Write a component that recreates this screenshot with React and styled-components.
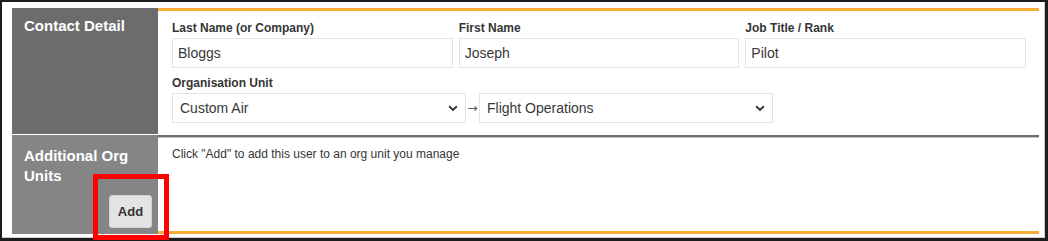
import React from 'react';
import styled, { createGlobalStyle } from 'styled-components';

const GlobalStyle = createGlobalStyle`
  html, body {
    margin: 0;
    padding: 0;
    background: #ffffff;
  }
  body {
    font-family: "Liberation Sans", Arial, sans-serif;
  }
  * {
    box-sizing: border-box;
  }
`;

const Frame = styled.div`
  position: relative;
  width: 1048px;
  height: 241px;
  border-style: solid;
  border-color: #1d1d1d;
  border-width: 2px 3px 3px 2px;
  box-shadow: inset -1px -1px 0 #cfcfcf;
  background: #fff;
  padding: 6px 6px 4px 10px;
`;

const Table = styled.div`
  display: flex;
  flex-direction: column;
`;

const Row = styled.div`
  display: flex;
  height: ${p => p.$height}px;
`;

const LabelCell = styled.div`
  width: 146px;
  flex-shrink: 0;
  display: flex;
  flex-direction: column;
  background: ${p => p.$bg};
  border-bottom: ${p => (p.$gapBottom ? '1px solid #fff' : 'none')};
  padding: ${p => p.$padTop}px 6px 6px 12px;
`;

const LabelText = styled.div`
  color: #ffffff;
  font-weight: bold;
  font-size: 15px;
  line-height: 20px;
  width: 118px;
`;

const ContentCell = styled.div`
  flex: 1;
  background: #fff;
  border-top: ${p => p.$top};
  border-bottom: ${p => p.$bottom || 'none'};
  box-shadow: ${p => p.$shadow || 'none'};
  padding: ${p => p.$padding};
`;

const FieldRow = styled.div`
  display: flex;
  gap: 6px;
  margin-bottom: ${p => p.$mb || 0}px;
`;

const Field = styled.div`
  flex: ${p => (p.$fixed ? '0 0 auto' : '1')};
  display: flex;
  flex-direction: column;
`;

const FieldLabel = styled.label`
  font-size: 12px;
  line-height: 14px;
  font-weight: bold;
  color: #353535;
  margin-bottom: 3px;
`;

const TextInput = styled.input`
  height: 30px;
  border: 1px solid #e4e4e4;
  padding: 0 5px;
  font-family: "Liberation Sans", Arial, sans-serif;
  font-size: 14px;
  color: #383838;
  background: #fff;
  outline: none;
`;

const SelectGroup = styled.div`
  display: flex;
  align-items: center;
`;

const SelectWrap = styled.div`
  position: relative;
  width: ${p => p.$width}px;
  height: 30px;
`;

const Select = styled.select`
  appearance: none;
  -webkit-appearance: none;
  width: 100%;
  height: 30px;
  border: 1px solid #e4e4e4;
  border-radius: 0;
  padding: 0 24px 0 7px;
  font-family: "Liberation Sans", Arial, sans-serif;
  font-size: 14px;
  color: #383838;
  background: #fff;
  outline: none;
`;

const Chevron = styled.svg`
  position: absolute;
  right: 8px;
  top: 12px;
  pointer-events: none;
`;

const Arrow = styled.span`
  width: 13px;
  text-align: center;
  font-family: "DejaVu Sans", sans-serif;
  font-size: 12px;
  color: #555;
  line-height: 30px;
`;

const Hint = styled.div`
  font-size: 12px;
  line-height: 14px;
  color: #353535;
`;

const AddButton = styled.button`
  margin-top: auto;
  align-self: flex-end;
  width: 43px;
  height: 33px;
  background: #e3e3e3;
  border: 1px solid #d4d4d4;
  border-radius: 3px;
  font-family: "Liberation Sans", Arial, sans-serif;
  font-weight: bold;
  font-size: 13px;
  color: #333;
  padding: 0;
`;

const Highlight = styled.div`
  position: absolute;
  left: 91px;
  top: 172px;
  width: 76px;
  height: 66px;
  border: 5px solid #ff0000;
  pointer-events: none;
`;

const ChevronIcon = () => (
  <Chevron width="10" height="7" viewBox="0 0 10 7">
    <path d="M1.2 1.3 L5 5 L8.8 1.3" fill="none" stroke="#333" strokeWidth="1.9" />
  </Chevron>
);

const DropDown = ({ width, value }) => (
  <SelectWrap $width={width}>
    <Select defaultValue={value}>
      <option>{value}</option>
    </Select>
    <ChevronIcon />
  </SelectWrap>
);

export default function App() {
  return (
    <>
      <GlobalStyle />
      <Frame>
        <Table>
          <Row $height={127}>
            <LabelCell $bg="#6c6c6c" $padTop={8} $gapBottom>
              <LabelText>Contact Detail</LabelText>
            </LabelCell>
            <ContentCell $top="3px solid #f9ae33" $padding="10px 13px 12px 14px">
              <FieldRow $mb={8}>
                <Field>
                  <FieldLabel>Last Name (or Company)</FieldLabel>
                  <TextInput defaultValue="Bloggs" />
                </Field>
                <Field>
                  <FieldLabel>First Name</FieldLabel>
                  <TextInput defaultValue="Joseph" />
                </Field>
                <Field>
                  <FieldLabel>Job Title / Rank</FieldLabel>
                  <TextInput defaultValue="Pilot" />
                </Field>
              </FieldRow>
              <FieldRow>
                <Field $fixed>
                  <FieldLabel>Organisation Unit</FieldLabel>
                  <SelectGroup>
                    <DropDown width={294} value="Custom Air" />
                    <Arrow>&#8594;</Arrow>
                    <DropDown width={294} value="Flight Operations" />
                  </SelectGroup>
                </Field>
              </FieldRow>
            </ContentCell>
          </Row>
          <Row $height={99}>
            <LabelCell $bg="#858585" $padTop={11}>
              <LabelText>Additional Org Units</LabelText>
              <AddButton>Add</AddButton>
            </LabelCell>
            <ContentCell
              $top="2px solid #6e6e6e"
              $bottom="3px solid #f9ae33"
              $shadow="inset 0 1px 0 #c2c2c2"
              $padding="10px 13px 0 14px"
            >
              <Hint>Click "Add" to add this user to an org unit you manage</Hint>
            </ContentCell>
          </Row>
        </Table>
        <Highlight />
      </Frame>
    </>
  );
}
